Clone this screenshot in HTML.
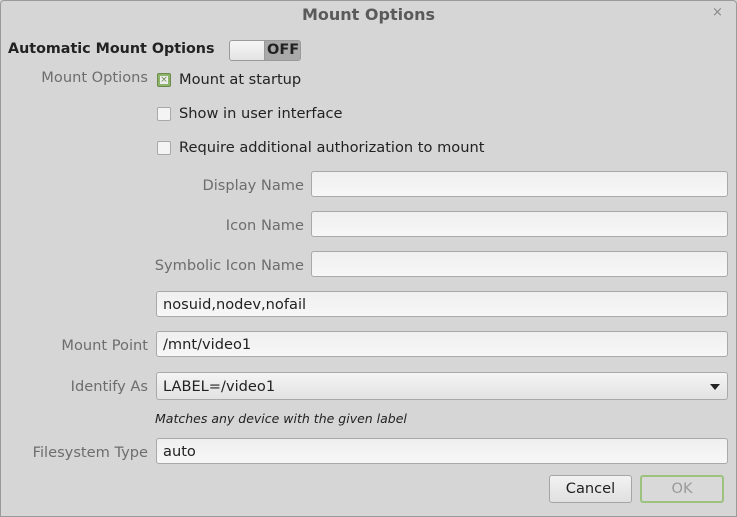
<!DOCTYPE html>
<html><head><style>
html,body{margin:0;padding:0}
body{width:737px;height:517px;background:#d6d6d6;font-family:"DejaVu Sans","Liberation Sans",sans-serif;font-size:14.6px;color:#222;position:relative;overflow:hidden}
.frame{position:absolute;left:0;top:0;width:735px;height:515px;border:1px solid #9a9a9a;border-radius:4px 4px 0 0}
.a{position:absolute;white-space:nowrap}
.lbl{position:absolute;color:#6d6d6d;text-align:right;white-space:nowrap}
.entry{position:absolute;height:26px;border:1px solid #a9a9a9;border-radius:3px;background:linear-gradient(#efefef,#f7f7f7);box-sizing:border-box;padding-left:6px;line-height:25px;color:#222}
.cb{position:absolute;width:14px;height:14px;border:1px solid #a9a9a9;border-radius:2px;background:#f4f4f4;box-sizing:border-box}
.btn{position:absolute;height:28px;border:1px solid #a5a5a5;border-radius:3px;background:linear-gradient(#f2f2f2,#e0e0e0);box-sizing:border-box;text-align:center;line-height:26px}
</style></head><body>
<div class="frame"></div>
<div class="a" style="left:0;width:737px;top:5px;text-align:center;font-weight:bold;font-size:16px;color:#5a5a5a">Mount Options</div>
<div class="a" style="left:712px;top:5px;color:#888;font-size:13px">×</div>

<div class="a" style="left:8px;top:41px;font-weight:bold;font-size:14.3px">Automatic Mount Options</div>
<div class="a" style="left:229px;top:40px;width:72px;height:21px;border:1px solid #9a9a9a;border-radius:3px;box-sizing:border-box;background:#a9a9a9;overflow:hidden">
 <div style="position:absolute;left:0;top:0;width:34px;height:19px;background:linear-gradient(#f6f6f6,#e4e4e4);border-right:1px solid #9a9a9a"></div>
 <div style="position:absolute;left:37px;top:1px;font-weight:bold;font-size:14.5px;color:#222">OFF</div>
</div>

<div class="lbl" style="right:589px;top:69px">Mount Options</div>
<div class="cb" style="left:157px;top:73px;background:#8fb36b;border-color:#6a8a4b"><div style="position:absolute;left:2px;top:2px;width:8px;height:8px;background:#eee;font-size:9px;line-height:8px;text-align:center;color:#6a8a4b">×</div></div>
<div class="a" style="left:179px;top:71px">Mount at startup</div>
<div class="cb" style="left:157px;top:107px"></div>
<div class="a" style="left:179px;top:105px">Show in user interface</div>
<div class="cb" style="left:157px;top:141px"></div>
<div class="a" style="left:179px;top:139px">Require additional authorization to mount</div>

<div class="lbl" style="right:433px;top:177px">Display Name</div>
<div class="entry" style="left:311px;top:171px;width:417px"></div>
<div class="lbl" style="right:433px;top:217px">Icon Name</div>
<div class="entry" style="left:311px;top:211px;width:417px"></div>
<div class="lbl" style="right:433px;top:257px">Symbolic Icon Name</div>
<div class="entry" style="left:311px;top:251px;width:417px"></div>

<div class="entry" style="left:156px;top:291px;width:572px">nosuid,nodev,nofail</div>
<div class="lbl" style="right:589px;top:337px">Mount Point</div>
<div class="entry" style="left:156px;top:331px;width:572px">/mnt/video1</div>
<div class="lbl" style="right:589px;top:378px">Identify As</div>
<div class="entry" style="left:156px;top:372px;width:572px;height:28px;line-height:27px;background:linear-gradient(#f4f4f4,#e2e2e2)">LABEL=/video1
 <div style="position:absolute;right:7px;top:11px;width:0;height:0;border-left:5px solid transparent;border-right:5px solid transparent;border-top:6px solid #222"></div></div>
<div class="a" style="left:155px;top:411px;font-size:12.5px;font-style:italic;color:#222">Matches any device with the given label</div>
<div class="lbl" style="right:589px;top:444px">Filesystem Type</div>
<div class="entry" style="left:156px;top:438px;width:572px">auto</div>

<div class="btn" style="left:549px;top:475px;width:83px">Cancel</div>
<div class="btn" style="left:640px;top:475px;width:84px;border:2px solid #9cc27e;color:#999;line-height:24px;background:#d9d9d9">OK</div>
</body></html>
